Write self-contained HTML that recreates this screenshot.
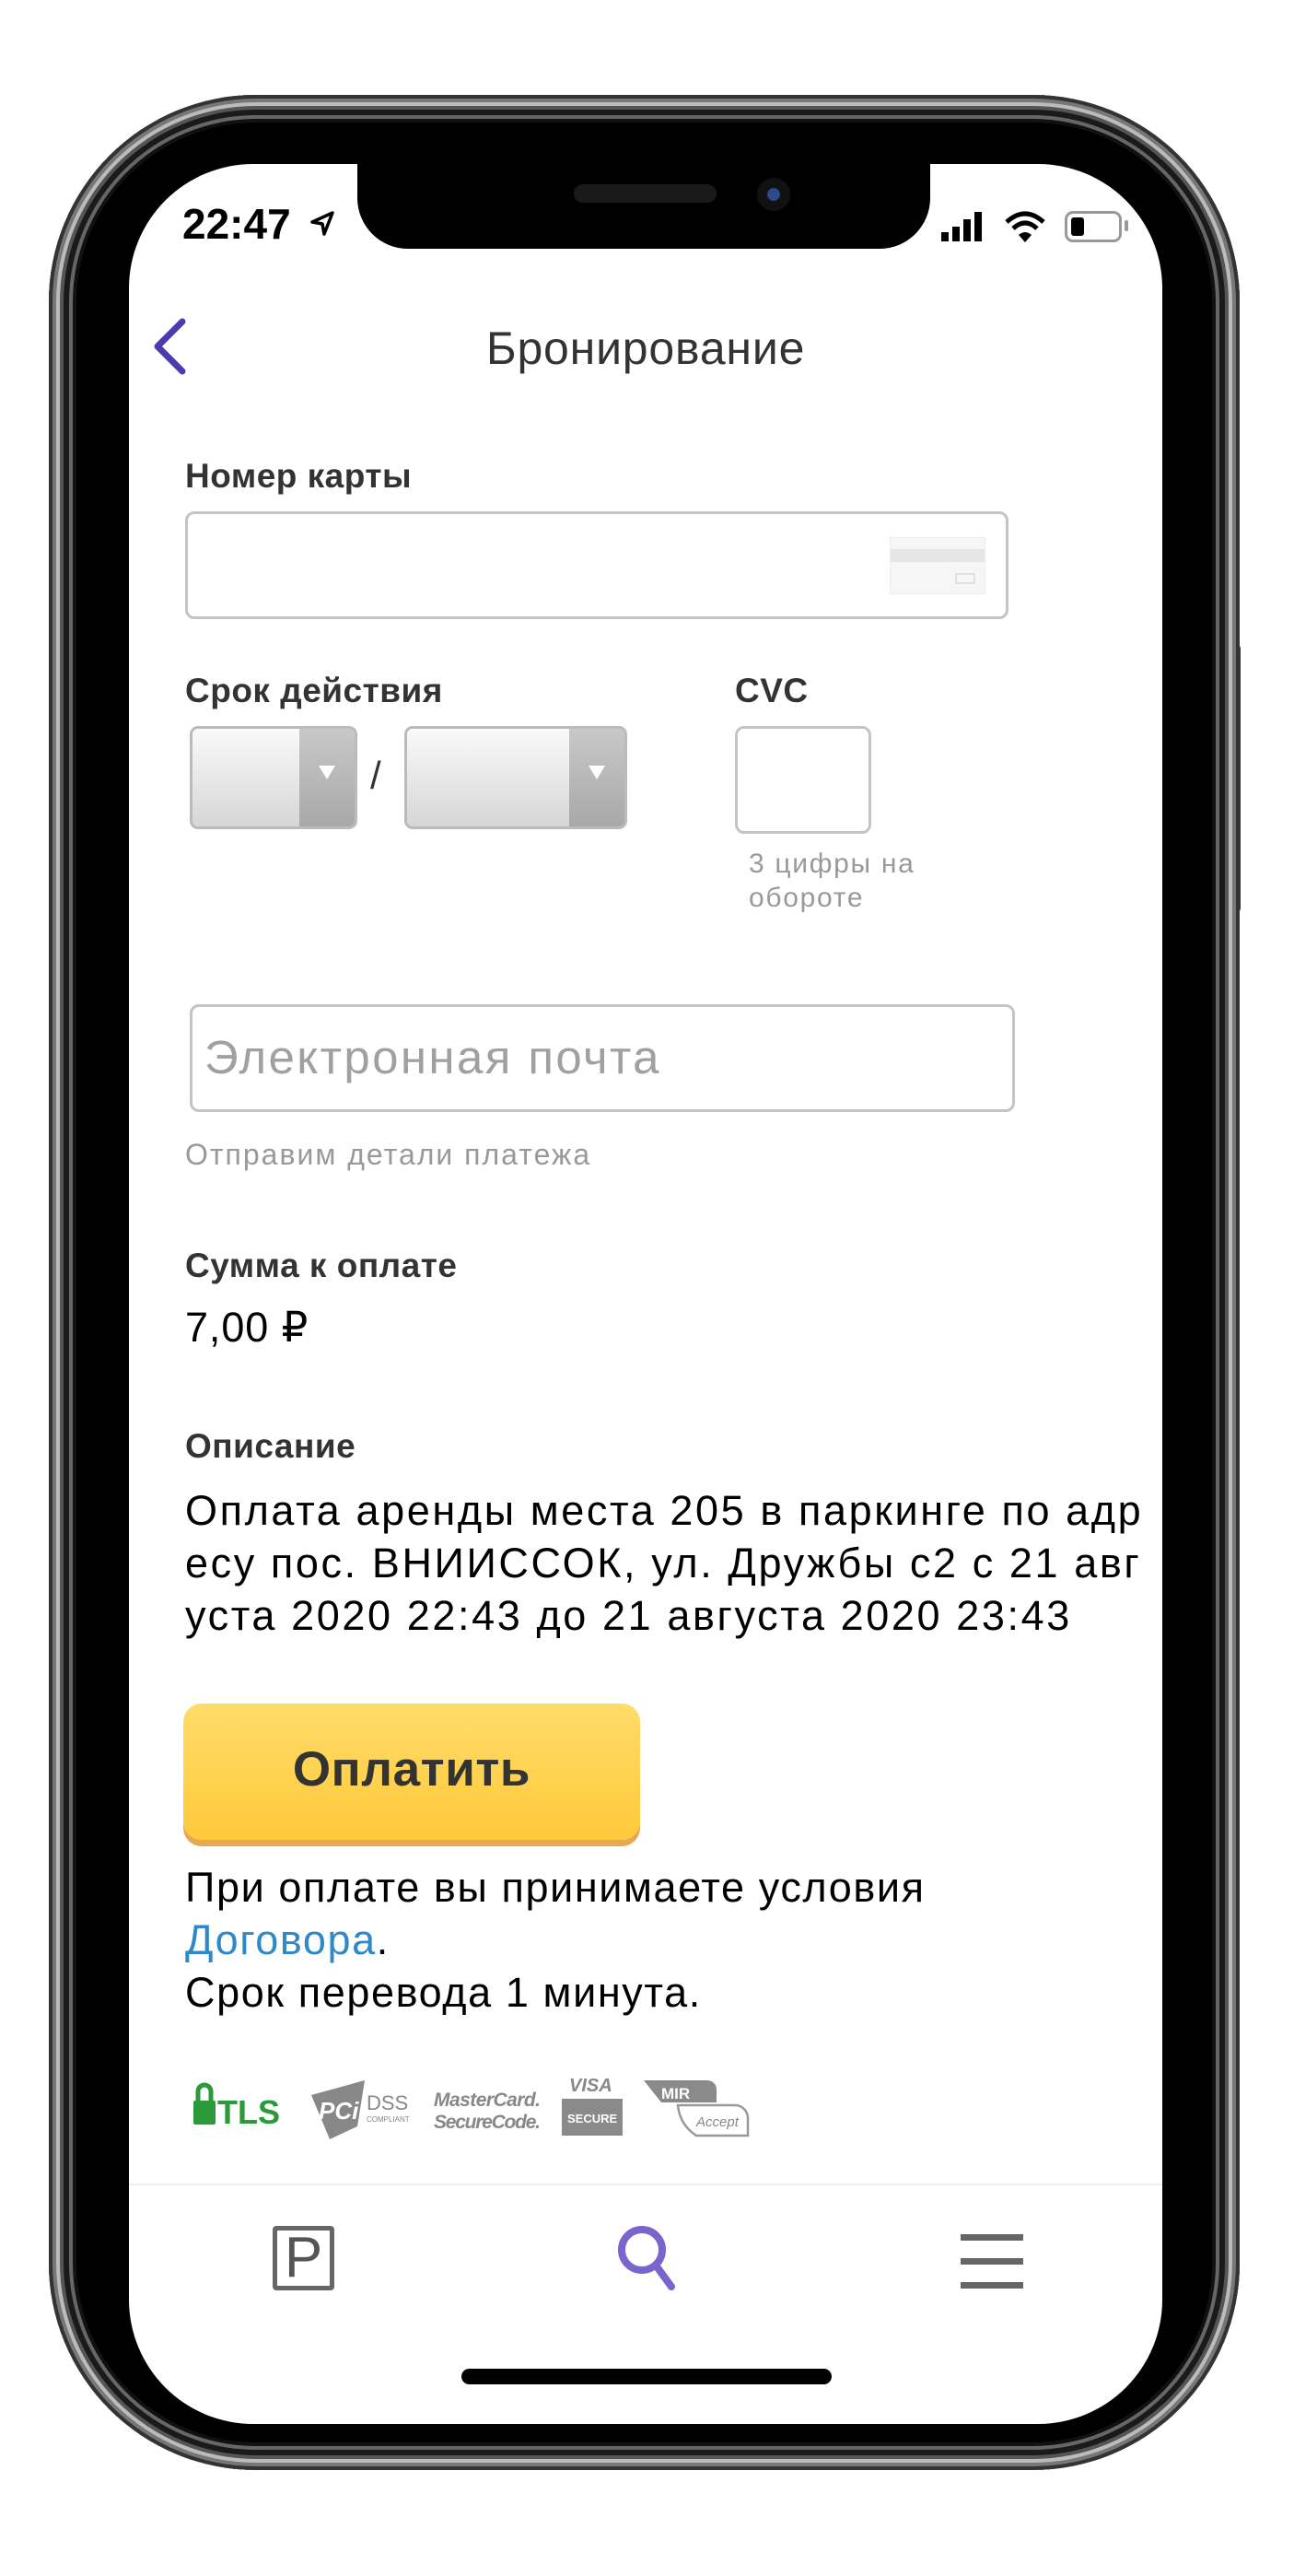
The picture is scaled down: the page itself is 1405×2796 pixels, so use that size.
<!DOCTYPE html>
<html><head><meta charset="utf-8"><style>
*{margin:0;padding:0;box-sizing:border-box}
body{width:1405px;height:2796px;background:#fff;position:relative;overflow:hidden;font-family:"Liberation Sans","DejaVu Sans",sans-serif}
.a{position:absolute;white-space:nowrap}
.frame{left:53px;top:103px;width:1293px;height:2578px;border-radius:225px;background:#000;box-shadow:inset 0 0 0 4px #333,inset 0 0 0 8px #777,inset 0 0 0 12px #bbb,inset 0 0 0 16px #555,inset 0 0 0 22px #1a1a1a,inset 0 0 0 26px #666,inset 0 0 0 30px #111;}
.btn-side{background:#333;border-radius:4px}
.screen{left:140px;top:178px;width:1122px;height:2453px;border-radius:135px;background:#fff;overflow:hidden}
.lbl{font-weight:bold;font-size:37px;color:#333;letter-spacing:0.5px}
.txt{font-size:45px;color:#000;letter-spacing:0.9px}
.inp{border:3px solid #c4c4c4;border-radius:10px;background:#fff}
.sel{border:3px solid #bbb;border-radius:9px;background:linear-gradient(#fafafa,#d6d6d6);overflow:hidden}
.sel i{position:absolute;right:0;top:0;bottom:0;width:60px;background:linear-gradient(#c8c8c8,#a8a8a8);}
.sel i:after{content:"";position:absolute;left:21px;top:40px;border-left:9px solid transparent;border-right:9px solid transparent;border-top:15px solid #fff}
</style></head><body>
<div class="a btn-side" style="left:53px;top:450px;width:12px;height:90px"></div>
<div class="a btn-side" style="left:53px;top:630px;width:12px;height:170px"></div>
<div class="a btn-side" style="left:53px;top:870px;width:12px;height:170px"></div>
<div class="a btn-side" style="left:1335px;top:700px;width:12px;height:290px"></div>
<div class="a frame"></div>
<div class="a screen">
 <div class="a" style="left:248px;top:0;width:622px;height:92px;background:#000;border-radius:0 0 55px 55px"></div>
 <div class="a" style="left:483px;top:22px;width:155px;height:20px;background:#1a1a1a;border-radius:10px"></div>
 <div class="a" style="left:682px;top:15px;width:36px;height:36px;background:#111;border-radius:50%"><div style="margin:11px;width:14px;height:14px;border-radius:50%;background:#2a4a88"></div></div>
 <div class="a" style="left:58px;top:38px;font-size:46px;font-weight:bold;color:#000">22:47</div>
 <svg class="a" style="left:195px;top:50px" width="30" height="30" viewBox="0 0 30 30"><path d="M26 3 L4 13 L15 15 L17 26 Z" fill="none" stroke="#000" stroke-width="3.5" stroke-linejoin="round"/></svg>
 <svg class="a" style="left:882px;top:52px" width="46" height="32"><rect x="0" y="22" width="8" height="10" fill="#000"/><rect x="12" y="16" width="8" height="16" fill="#000"/><rect x="24" y="8" width="8" height="24" fill="#000"/><rect x="36" y="0" width="8" height="32" fill="#000"/></svg>
 <svg class="a" style="left:950px;top:50px" width="46" height="36" viewBox="0 0 46 36"><path d="M3 13 Q23 -5 43 13" fill="none" stroke="#000" stroke-width="5"/><path d="M10 20 Q23 8 36 20" fill="none" stroke="#000" stroke-width="5"/><path d="M16 27 L23 35 L30 27 Q23 21 16 27Z" fill="#000"/></svg>
 <div class="a" style="left:1016px;top:51px;width:62px;height:34px;border:3px solid #999;border-radius:9px"><div style="margin:4px;width:14px;height:20px;background:#000;border-radius:3px"></div></div>
 <div class="a" style="left:1081px;top:61px;width:4px;height:12px;background:#999;border-radius:2px"></div>
 <svg class="a" style="left:22px;top:165px" width="44" height="66" viewBox="0 0 44 66"><path d="M36 6 L9 33 L36 60" fill="none" stroke="#4a3cb0" stroke-width="7" stroke-linecap="round" stroke-linejoin="round"/></svg>
 <div class="a" style="left:0;width:1122px;text-align:center;top:171px;font-size:50px;color:#333;letter-spacing:0.8px">Бронирование</div>
 <div class="a lbl" style="left:61px;top:318px">Номер карты</div>
 <div class="a inp" style="left:61px;top:377px;width:894px;height:117px"></div>
 <div class="a" style="left:826px;top:405px;width:104px;height:62px;background:#f6f6f6;border:1px solid #eee"><div style="margin-top:12px;height:14px;background:#e6e6e6"></div><div style="position:absolute;right:10px;bottom:10px;width:22px;height:12px;border:2px solid #e0e0e0"></div></div>
 <div class="a lbl" style="left:61px;top:551px">Срок действия</div>
 <div class="a sel" style="left:66px;top:610px;width:182px;height:112px"><i></i></div>
 <div class="a" style="left:262px;top:640px;font-size:42px;color:#333">/</div>
 <div class="a sel" style="left:299px;top:610px;width:242px;height:112px"><i></i></div>
 <div class="a lbl" style="left:658px;top:551px">CVC</div>
 <div class="a inp" style="left:658px;top:610px;width:148px;height:117px"></div>
 <div class="a" style="left:673px;top:741px;font-size:30px;color:#999;line-height:37px;letter-spacing:1.7px">3 цифры на<br>обороте</div>
 <div class="a inp" style="left:66px;top:912px;width:896px;height:117px"></div>
 <div class="a" style="left:82px;top:940px;font-size:51px;color:#a0a0a0;letter-spacing:2.4px">Электронная почта</div>
 <div class="a" style="left:61px;top:1057px;font-size:32px;color:#999;letter-spacing:2px">Отправим детали платежа</div>
 <div class="a lbl" style="left:61px;top:1175px">Сумма к оплате</div>
 <div class="a txt" style="left:61px;top:1236px">7,00 ₽</div>
 <div class="a lbl" style="left:61px;top:1371px">Описание</div>
 <div class="a txt" style="left:61px;top:1433px;line-height:57px;letter-spacing:2.6px">Оплата аренды места 205 в паркинге по адр<br>есу пос. ВНИИССОК, ул. Дружбы с2 с 21 авг<br>уста 2020 22:43 до 21 августа 2020 23:43</div>
 <div class="a" style="left:59px;top:1671px;width:496px;height:148px;border-radius:20px;background:linear-gradient(#ffdc6a,#ffc93a);box-shadow:0 7px 0 #e8a850"></div>
 <div class="a" style="left:59px;top:1712px;width:496px;text-align:center;font-size:53px;font-weight:bold;color:#333;letter-spacing:0.6px">Оплатить</div>
 <div class="a txt" style="left:61px;top:1842px;line-height:57px;letter-spacing:1.6px">При оплате вы принимаете условия<br><span style="color:#2f88c8">Договора</span>.<br>Срок перевода 1 минута.</div>
 <svg class="a" style="left:68px;top:2050px" width="620" height="100" viewBox="0 0 620 100">
  <rect x="2" y="52" width="24" height="26" rx="2" fill="#2a9a3a"/><path d="M7 52 V42 a7 7 0 0 1 14 0 V52" fill="none" stroke="#2a9a3a" stroke-width="5"/>
  <text x="28" y="77" font-family="Liberation Sans" font-weight="bold" font-size="36" fill="#2a9a3a" textLength="68">TLS</text>
  <path d="M130 46 L188 30 L180 80 L150 94 Z" fill="#888"/><text x="138" y="72" font-family="Liberation Sans" font-weight="bold" font-style="italic" font-size="26" fill="#fff">PCi</text>
  <text x="190" y="62" font-family="Liberation Sans" font-size="22" fill="#888">DSS</text><text x="190" y="75" font-family="Liberation Sans" font-size="8" fill="#888">COMPLIANT</text>
  <text x="263" y="58" font-family="Liberation Sans" font-style="italic" font-weight="bold" font-size="21" fill="#888" textLength="116">MasterCard.</text>
  <text x="263" y="82" font-family="Liberation Sans" font-style="italic" font-weight="bold" font-size="21" fill="#888" textLength="116">SecureCode.</text>
  <text x="410" y="42" font-family="Liberation Sans" font-style="italic" font-weight="bold" font-size="20" fill="#888">VISA</text>
  <rect x="402" y="50" width="66" height="40" fill="#8a8a8a"/><text x="408" y="76" font-family="Liberation Sans" font-weight="bold" font-size="13" fill="#fff">SECURE</text>
  <path d="M491 30 H560 a10 10 0 0 1 10 10 V54 H510 Z" fill="#8a8a8a"/><text x="510" y="50" font-family="Liberation Sans" font-weight="bold" font-size="17" fill="#fff">MIR</text>
  <path d="M528 57 H590 a14 14 0 0 1 14 14 V90 H548 Q530 78 528 57Z" fill="none" stroke="#999" stroke-width="2.5"/><text x="548" y="80" font-family="Liberation Sans" font-style="italic" font-size="15" fill="#888">Accept</text>
 </svg>
 <div class="a" style="left:0;top:2192px;width:1122px;height:2px;background:#eee"></div>
 <div class="a" style="left:156px;top:2238px;width:67px;height:70px;border:5px solid #666;border-radius:4px;font-size:62px;color:#555;text-align:center;line-height:60px">P</div>
 <svg class="a" style="left:527px;top:2234px" width="80" height="80" viewBox="0 0 80 80"><circle cx="30" cy="30" r="22" fill="none" stroke="#7a65cc" stroke-width="8"/><path d="M46 48 L62 70" stroke="#7a65cc" stroke-width="8" stroke-linecap="round"/></svg>
 <div class="a" style="left:903px;top:2247px;width:68px;height:7px;background:#666"></div>
 <div class="a" style="left:903px;top:2273px;width:68px;height:7px;background:#666"></div>
 <div class="a" style="left:903px;top:2299px;width:68px;height:7px;background:#666"></div>
 <div class="a" style="left:361px;top:2393px;width:402px;height:17px;background:#000;border-radius:9px"></div>
</div>
</body></html>
